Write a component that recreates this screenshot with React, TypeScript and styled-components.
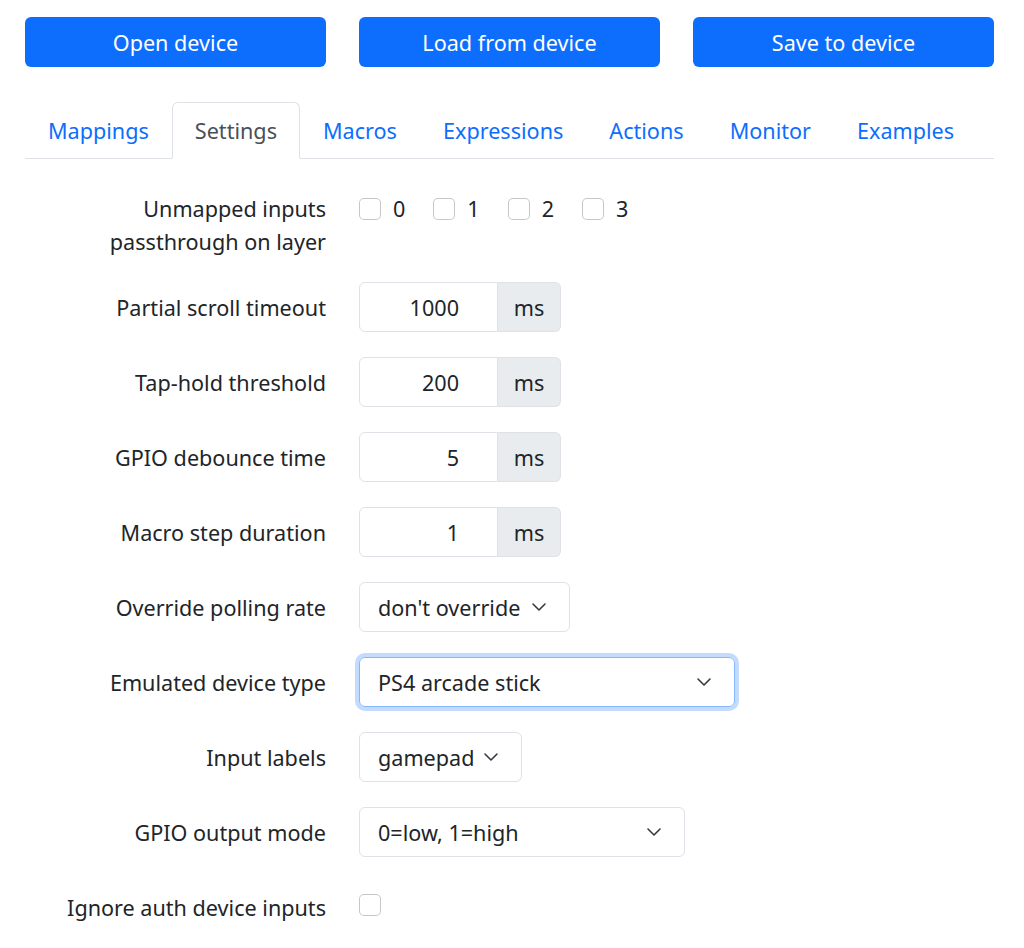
import styled, { createGlobalStyle } from "styled-components"

const GlobalStyle = createGlobalStyle`
  body {
    margin: 0;
    background: #fff;
    color: #212529;
    font-family: "Noto Sans", "Open Sans", sans-serif;
    font-size: 21.6px;
  }
`

const tabs = ["Mappings", "Settings", "Macros", "Expressions", "Actions", "Monitor", "Examples"]

const timings = [
  { label: "Partial scroll timeout", value: "1000" },
  { label: "Tap-hold threshold", value: "200" },
  { label: "GPIO debounce time", value: "5" },
  { label: "Macro step duration", value: "1" },
]

export default function App() {
  return (
    <>
      <GlobalStyle />
      <Page>
        <ButtonRow>
          <Button>Open device</Button>
          <Button>Load from device</Button>
          <Button>Save to device</Button>
        </ButtonRow>

        <TabBar>
          {tabs.map((t) => (
            <Tab key={t} active={t === "Settings"}>
              {t}
            </Tab>
          ))}
        </TabBar>

        <Form>
          <Label multiline>
            Unmapped inputs
            <br />
            passthrough on layer
          </Label>
          <CheckList>
            {[0, 1, 2, 3].map((n) => (
              <CheckItem key={n}>
                <Check />
                {n}
              </CheckItem>
            ))}
          </CheckList>

          {timings.map((t) => (
            <FieldPair key={t.label}>
              <Label>{t.label}</Label>
              <InputGroup>
                <NumberBox>{t.value}</NumberBox>
                <Addon>ms</Addon>
              </InputGroup>
            </FieldPair>
          ))}

          <Label>Override polling rate</Label>
          <Select width={211}>
            don't override
            <Chevron />
          </Select>

          <Label>Emulated device type</Label>
          <Select width={376} focused>
            PS4 arcade stick
            <Chevron />
          </Select>

          <Label>Input labels</Label>
          <Select width={163}>
            gamepad
            <Chevron />
          </Select>

          <Label>GPIO output mode</Label>
          <Select width={326}>
            0=low, 1=high
            <Chevron />
          </Select>

          <Label>Ignore auth device inputs</Label>
          <SingleCheck>
            <Check />
          </SingleCheck>
        </Form>
      </Page>
    </>
  )
}

function Chevron() {
  return (
    <ChevronIcon viewBox="0 0 16 16" fill="none">
      <path d="m2 5 6 6 6-6" stroke="#343a40" strokeWidth="1.6" strokeLinecap="round" strokeLinejoin="round" />
    </ChevronIcon>
  )
}

const Page = styled.div`
  width: 969px;
  padding: 17px 0 0 25px;
`

const ButtonRow = styled.div`
  display: grid;
  grid-template-columns: repeat(3, 1fr);
  column-gap: 33px;
`

const Button = styled.button`
  height: 50px;
  border: 0;
  border-radius: 6px;
  background: #0d6efd;
  color: #fff;
  font: inherit;
  cursor: pointer;
`

const TabBar = styled.div`
  display: flex;
  margin-top: 35px;
  height: 56px;
  border-bottom: 1px solid #dee2e6;
`

const Tab = styled.div<{ active?: boolean }>`
  display: flex;
  align-items: center;
  padding: 0 22px;
  margin-bottom: -1px;
  border: 1px solid ${({ active }) => (active ? "#dee2e6" : "transparent")};
  border-bottom-color: ${({ active }) => (active ? "#fff" : "transparent")};
  border-radius: 6px 6px 0 0;
  background: ${({ active }) => (active ? "#fff" : "transparent")};
  color: ${({ active }) => (active ? "#495057" : "#0d6efd")};
`

const Form = styled.div`
  display: grid;
  grid-template-columns: 301px auto;
  column-gap: 33px;
  row-gap: 25px;
  margin-top: 33px;
  justify-items: start;
`

const FieldPair = styled.div`
  display: contents;
`

const Label = styled.div<{ multiline?: boolean }>`
  justify-self: end;
  align-self: ${({ multiline }) => (multiline ? "start" : "center")};
  text-align: right;
  line-height: 33px;
  margin-bottom: ${({ multiline }) => (multiline ? "-1px" : "0")};
`

const CheckList = styled.div`
  display: flex;
  gap: 28px;
  height: 33px;
  align-items: center;
`

const CheckItem = styled.label`
  display: flex;
  align-items: center;
  gap: 12px;
`

const Check = styled.span`
  display: inline-block;
  width: 22px;
  height: 22px;
  box-sizing: border-box;
  border: 1px solid rgba(0, 0, 0, 0.22);
  border-radius: 5px;
  background: #fff;
`

const SingleCheck = styled.div`
  height: 50px;
  box-sizing: border-box;
  padding-top: 11px;
`

const InputGroup = styled.div`
  display: flex;
  height: 50px;
`

const NumberBox = styled.div`
  width: 139px;
  box-sizing: border-box;
  display: flex;
  align-items: center;
  justify-content: flex-end;
  padding-right: 38px;
  border: 1px solid #dee2e6;
  border-radius: 6px 0 0 6px;
`

const Addon = styled.div`
  width: 63px;
  box-sizing: border-box;
  display: flex;
  align-items: center;
  justify-content: center;
  background: #e9ecef;
  border: 1px solid #dee2e6;
  border-left: 0;
  border-radius: 0 6px 6px 0;
`

const Select = styled.div<{ width: number; focused?: boolean }>`
  width: ${({ width }) => width}px;
  height: 50px;
  box-sizing: border-box;
  display: flex;
  align-items: center;
  justify-content: space-between;
  padding: 0 22px 0 18px;
  border: 1px solid ${({ focused }) => (focused ? "#86b7fe" : "#dee2e6")};
  border-radius: 6px;
  box-shadow: ${({ focused }) => (focused ? "0 0 0 4px rgba(13, 110, 253, 0.25)" : "none")};
  white-space: nowrap;
`

const ChevronIcon = styled.svg`
  width: 16px;
  height: 16px;
  flex-shrink: 0;
`
